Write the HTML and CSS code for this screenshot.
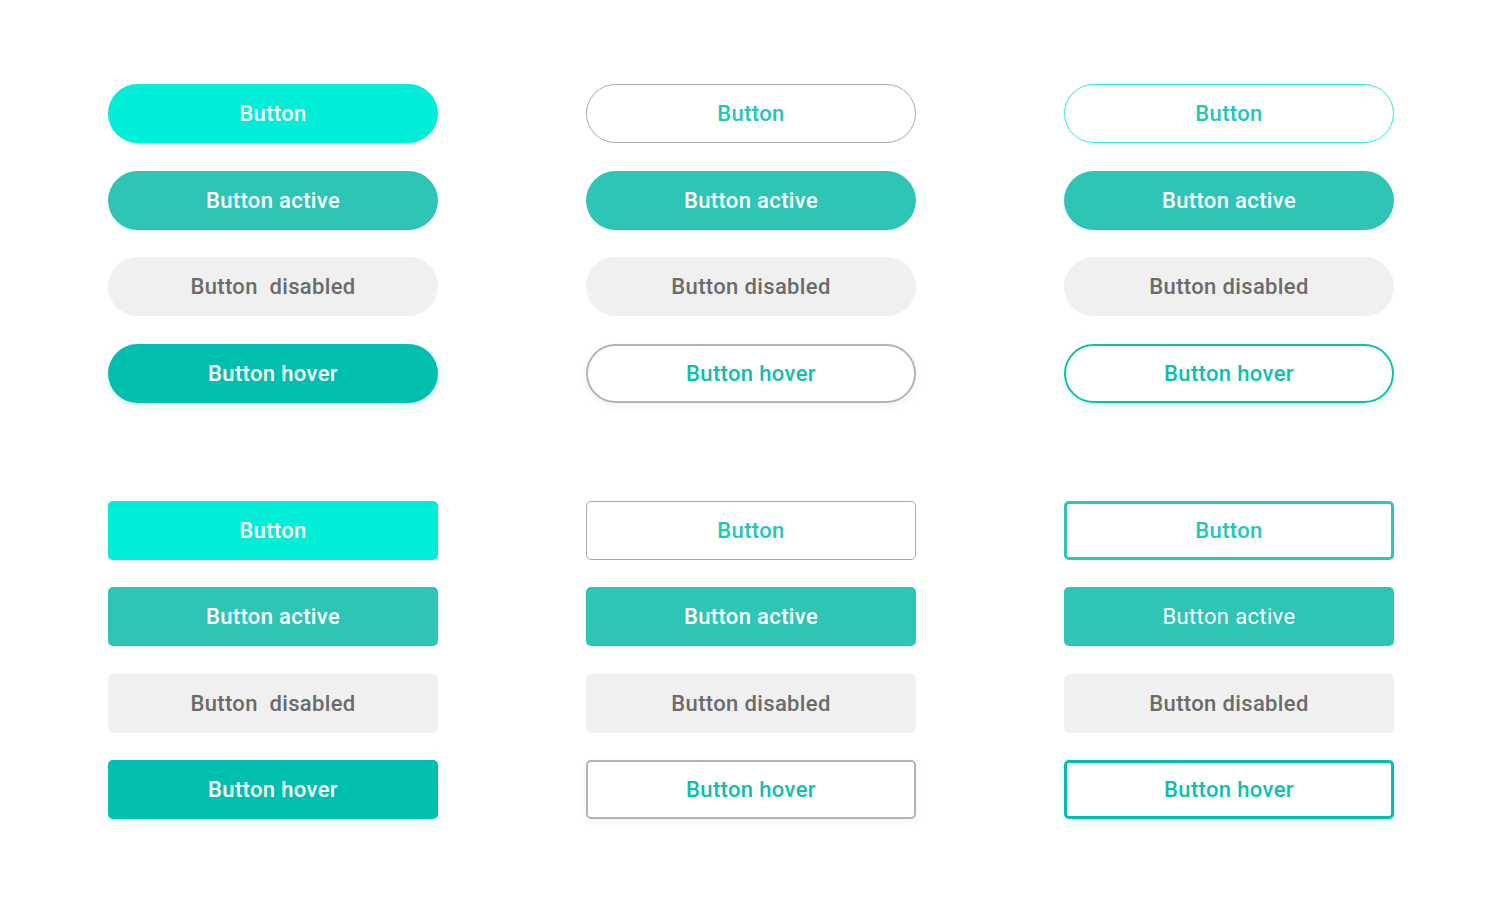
FILE: index.html
```html
<!DOCTYPE html>
<html lang="en">
<head>
  <meta charset="UTF-8">
  <meta name="viewport" content="width=device-width, initial-scale=1.0">
  <title>Buttons</title>
  <link rel="stylesheet" href="styles.css">
</head>
<body>

  <!-- Pill buttons -->
  <div class="group pill">
    <div class="column">
      <button class="btn solid">Button</button>
      <button class="btn active">Button active</button>
      <button class="btn disabled">Button &nbsp;disabled</button>
      <button class="btn hover">Button hover</button>
    </div>
    <div class="column">
      <button class="btn ghost">Button</button>
      <button class="btn active">Button active</button>
      <button class="btn disabled">Button disabled</button>
      <button class="btn ghost-hover">Button hover</button>
    </div>
    <div class="column">
      <button class="btn outline">Button</button>
      <button class="btn active">Button active</button>
      <button class="btn disabled">Button disabled</button>
      <button class="btn outline-hover">Button hover</button>
    </div>
  </div>

  <!-- Square buttons -->
  <div class="group square">
    <div class="column">
      <button class="btn solid">Button</button>
      <button class="btn active">Button active</button>
      <button class="btn disabled">Button &nbsp;disabled</button>
      <button class="btn hover">Button hover</button>
    </div>
    <div class="column">
      <button class="btn ghost">Button</button>
      <button class="btn active">Button active</button>
      <button class="btn disabled">Button disabled</button>
      <button class="btn ghost-hover">Button hover</button>
    </div>
    <div class="column">
      <button class="btn outline thick">Button</button>
      <button class="btn active light">Button active</button>
      <button class="btn disabled">Button disabled</button>
      <button class="btn outline-hover thick">Button hover</button>
    </div>
  </div>

</body>
</html>
```

FILE: styles.css
```css
/* Reset and base styles */
* { margin: 0; padding: 0; box-sizing: border-box; }
body, html { width: 100%; height: 100%; font-family: Roboto, "Liberation Sans", sans-serif; background: #fff; }
body { padding: 84px 0 0 108px; }

/* Groups */
.group { display: flex; gap: 148px; }
.group + .group { margin-top: 98px; }
.column { display: flex; flex-direction: column; gap: 27.5px; width: 330px; }

/* Buttons */
.btn {
  width: 330px;
  height: 59px;
  padding: 0;
  border: none;
  font-family: Roboto, "Liberation Sans", sans-serif;
  font-size: 22px;
  font-weight: 500;
  letter-spacing: 0.35px;
  color: #fff;
  background: #fff;
  cursor: pointer;
}
.pill .btn { border-radius: 30px; }
.square .btn { border-radius: 5px; }

.solid { background: #00edd7; }
.active { background: #2ec4b6; }
.active.light { font-weight: 400; }
.disabled { background: #f0f0f0; color: #6b6b6b; }
.hover { background: #00bfae; box-shadow: 0 4px 8px rgba(0, 191, 174, 0.12); }

.ghost { border: 1px solid #a9a9a9; color: #26c6b5; }
.ghost-hover { border: 2px solid #b3b3b3; color: #0cbfae; box-shadow: 0 3px 8px rgba(0, 0, 0, 0.06); }

.outline { border: 1px solid #2de9dc; color: #26c6b5; }
.outline-hover { border: 2px solid #10bfae; color: #0cbfae; box-shadow: 0 4px 8px rgba(0, 191, 174, 0.1); }
.outline.thick { border: 3px solid #2ec4b6; }
.outline-hover.thick { border: 3px solid #00bfae; }
```
